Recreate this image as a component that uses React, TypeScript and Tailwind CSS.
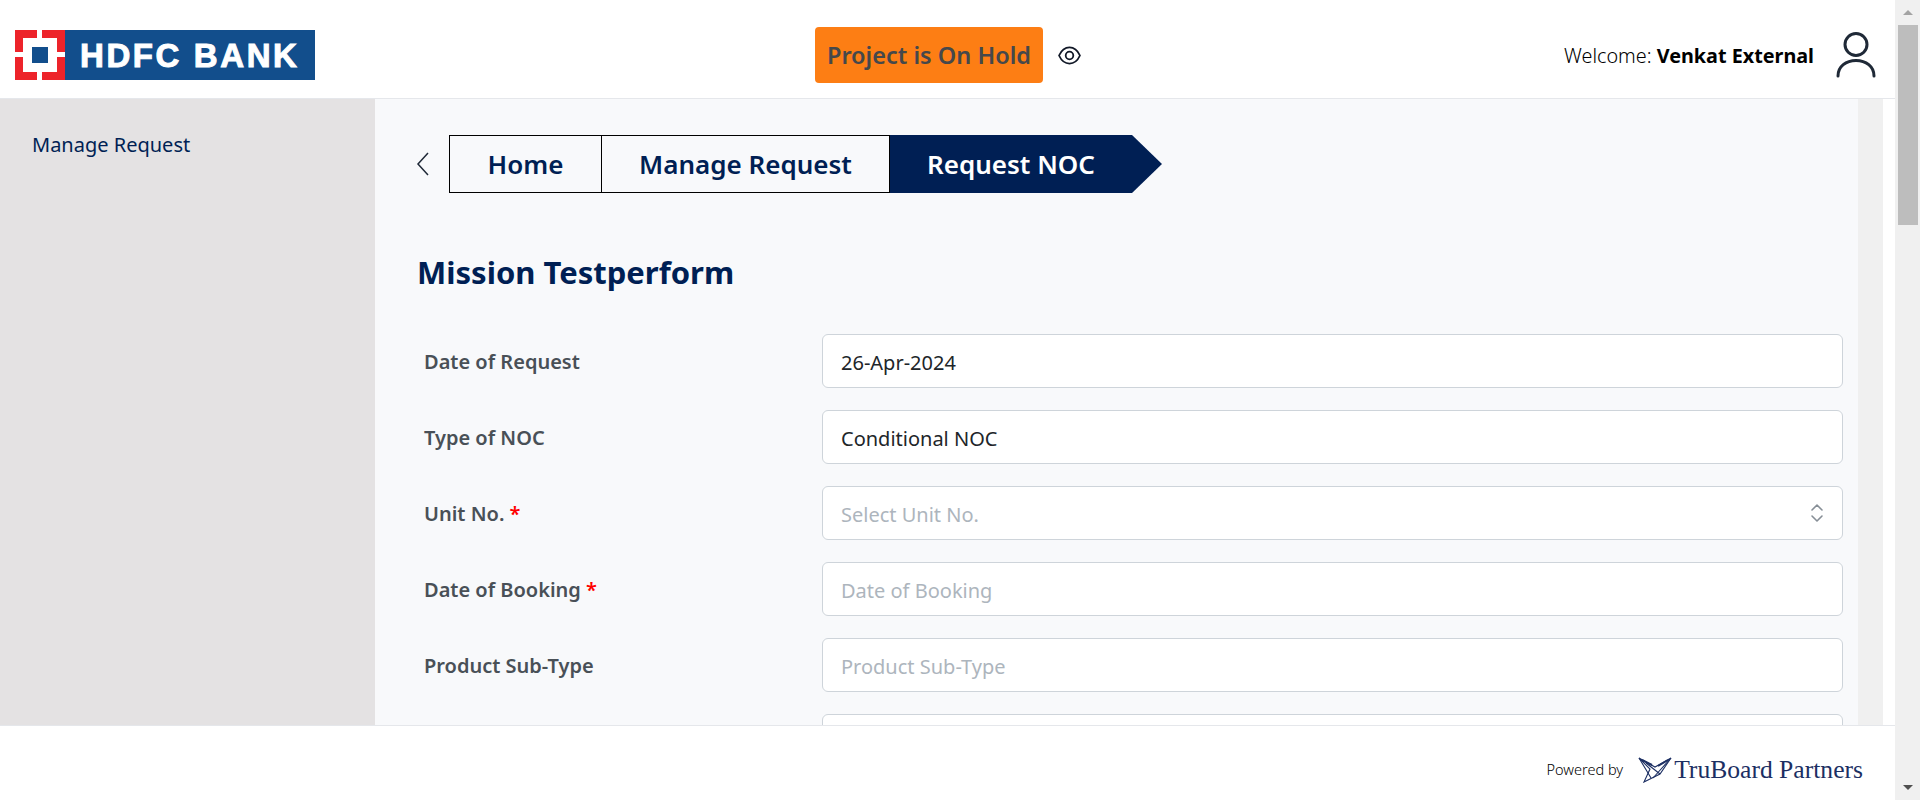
import { ChevronsUpDown } from "lucide-react";

const font = "font-['Noto_Sans',sans-serif]";

const HdfcLogo = () => (
  <div className="flex h-[50px] w-[300px] items-stretch">
    <svg viewBox="0 0 50 50" className="h-[50px] w-[50px] shrink-0">
      <rect width="50" height="50" fill="#ed232a" />
      <rect x="22" y="0" width="5" height="50" fill="#fff" />
      <rect x="0" y="22" width="50" height="5" fill="#fff" />
      <rect x="8" y="8" width="34" height="34" fill="#fff" />
      <rect x="17" y="17" width="16" height="16" fill="#124e8c" />
    </svg>
    <div className="flex flex-1 items-center bg-[#124e8c] pl-[15px]">
      <span className="font-['Liberation_Sans',sans-serif] text-[33px] font-bold leading-none tracking-[2.6px] text-white [-webkit-text-stroke:1px_white]">
        HDFC BANK
      </span>
    </div>
  </div>
);

const EyeIcon = () => (
  <svg viewBox="0 0 24 20" className="h-[19px] w-[23px]" fill="none" stroke="#111827" strokeWidth="1.9">
    <path d="M1 10C3.5 4.5 7.5 1.5 12 1.5S20.5 4.5 23 10C20.5 15.5 16.5 18.5 12 18.5S3.5 15.5 1 10Z" strokeLinejoin="round" />
    <circle cx="12" cy="10" r="4" />
  </svg>
);

const UserIcon = () => (
  <svg viewBox="0 0 40 46" className="h-[46px] w-[40px]" fill="none" stroke="#1f2937" strokeWidth="3" strokeLinecap="round">
    <circle cx="20" cy="12.5" r="11" />
    <path d="M2 44C2 34.5 10 28.5 20 28.5S38 34.5 38 44" />
  </svg>
);

const Header = () => (
  <header className="flex h-[99px] shrink-0 items-center border-b border-[#e5e7eb] bg-white pl-[15px] pt-[12px]">
    <HdfcLogo />
    <div className="ml-[500px] flex items-center">
      <div className="flex h-[56px] w-[228px] items-center justify-center rounded-[4px] bg-[#fd7e14] pt-[2px] text-[23.5px] font-semibold text-[#45484b]">
        Project is On Hold
      </div>
      <div className="ml-[15px]">
        <EyeIcon />
      </div>
    </div>
    <div className="ml-auto flex items-center pr-[19px]">
      <span className="pt-[2px] text-[19.8px] font-light text-black">
        Welcome: <span className="font-bold">Venkat External</span>
      </span>
      <div className="ml-[22px]">
        <UserIcon />
      </div>
    </div>
  </header>
);

const Breadcrumb = () => (
  <nav className="flex items-center">
    <svg viewBox="0 0 13 24" className="mr-[20px] h-[24px] w-[13px]" fill="none" stroke="#1f2937" strokeWidth="1.5">
      <path d="M12 1 2 12l10 11" />
    </svg>
    <div className="flex h-[58px] items-center text-[26px] font-semibold text-[#001f54]">
      <a className="flex h-full w-[153px] items-center justify-center border border-black">Home</a>
      <a className="flex h-full w-[288px] items-center justify-center border-y border-r border-black">Manage Request</a>
      <a className="flex h-full w-[272px] items-center pl-[37px] text-white bg-[#001f54] [clip-path:polygon(0_0,242px_0,100%_50%,242px_100%,0_100%)]">
        Request NOC
      </a>
    </div>
  </nav>
);

type RowProps = {
  label: string;
  required?: boolean;
  value?: string;
  placeholder?: string;
  select?: boolean;
};

const Row = ({ label, required, value, placeholder, select }: RowProps) => (
  <div className="flex h-[54px] shrink-0 items-center">
    <label className="w-[404px] shrink-0 pl-[6px] pt-[2px] text-[20px] font-semibold text-[#495057]">
      {label}
      {required ? <span className="text-[#ff0000]"> *</span> : null}
    </label>
    <div className="relative flex-1">
      <input
        readOnly
        value={value}
        placeholder={placeholder}
        className="h-[54px] w-full rounded-[6px] border border-[#ced4da] bg-white px-[18px] pt-[2px] text-[20px] text-[#212529] placeholder:text-[#adb5bd]"
      />
      {select ? (
        <ChevronsUpDown className="absolute right-[14px] top-[15px] h-[24px] w-[24px] text-[#868e96]" strokeWidth={1.6} />
      ) : null}
    </div>
  </div>
);

const TruBoardMark = () => (
  <svg viewBox="0 0 34 26" className="h-[26px] w-[34px]" fill="none" stroke="#1c2f63" strokeWidth="1.1">
    <path d="M1 1 17 10 33 1 22 17 6 25 12 12Z" />
    <path d="M1 1 13 21M33 1 15 21M8 6 22 17" />
    <path d="M4 3 14 8M30 3 20 9" strokeWidth="2" />
  </svg>
);

const Footer = () => (
  <footer className="flex h-[75px] shrink-0 items-center justify-end border-t border-[#e5e7eb] bg-white pr-[32px] pt-[14px]">
    <span className="text-[14.5px] font-light text-black">Powered by</span>
    <div className="ml-[15px] flex items-center gap-[2px]">
      <TruBoardMark />
      <span className="font-['Liberation_Serif',serif] text-[25.6px] leading-none text-[#1c2f63]">TruBoard Partners</span>
    </div>
  </footer>
);

const PageScrollbar = () => (
  <div className="flex w-[25px] shrink-0 flex-col items-center justify-between bg-[#f0f0f0]">
    <div className="flex w-full flex-col items-center">
      <div className="mt-[10px] h-0 w-0 border-x-[5px] border-b-[5px] border-x-transparent border-b-[#a3a3a3]" />
      <div className="mt-[10px] h-[200px] w-[20px] bg-[#bdbdbd]" />
    </div>
    <div className="mb-[10px] h-0 w-0 border-x-[5px] border-t-[5px] border-x-transparent border-t-[#505050]" />
  </div>
);

export default function App() {
  return (
    <div className={`flex h-screen overflow-hidden bg-white ${font}`}>
      <div className="flex min-w-0 flex-1 flex-col">
        <Header />
        <div className="flex min-h-0 flex-1">
          <aside className="w-[375px] shrink-0 bg-[#e4e2e3] pl-[32px] pt-[32px] text-[20px] leading-[28px] text-[#001f54]">
            Manage Request
          </aside>
          <main className="flex min-w-0 flex-1 flex-col overflow-hidden bg-[#f8f9fb] pl-[41px] pr-[15px] pt-[36px]">
            <Breadcrumb />
            <h1 className="ml-[1px] mt-[57px] text-[31px] font-bold leading-[44px] text-[#001f54]">Mission Testperform</h1>
            <div className="ml-[2px] mt-[40px] flex flex-col gap-[22px]">
              <Row label="Date of Request" value="26-Apr-2024" />
              <Row label="Type of NOC" value="Conditional NOC" />
              <Row label="Unit No." required placeholder="Select Unit No." select />
              <Row label="Date of Booking" required placeholder="Date of Booking" />
              <Row label="Product Sub-Type" placeholder="Product Sub-Type" />
              <Row label="" placeholder="" />
            </div>
          </main>
          <div className="w-[25px] shrink-0 bg-[#f0f0f0]" />
          <div className="w-[12px] shrink-0 bg-white" />
        </div>
        <Footer />
      </div>
      <PageScrollbar />
    </div>
  );
}
